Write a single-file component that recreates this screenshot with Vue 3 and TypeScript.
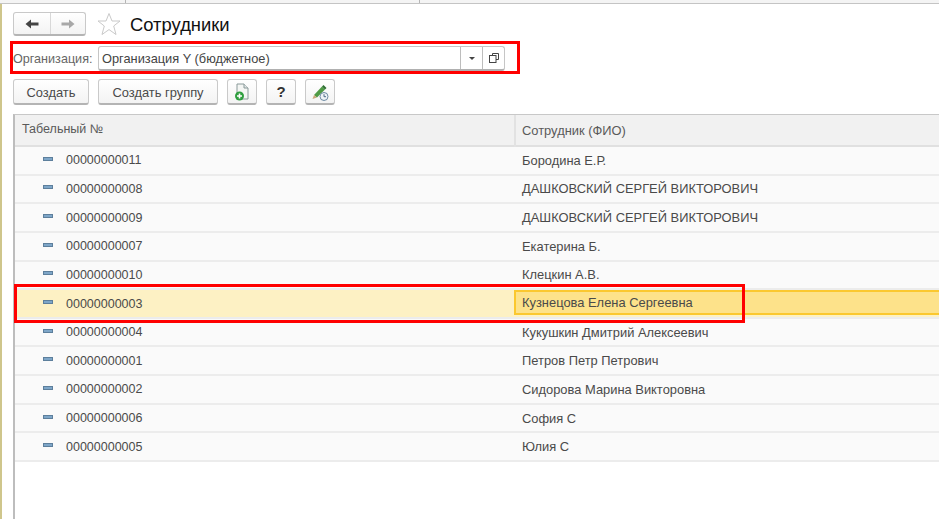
<script setup lang="ts">
interface Row { id: string; name: string; current?: boolean }
const rows: Row[] = [
  { id: '00000000011', name: 'Бородина Е.Р.' },
  { id: '00000000008', name: 'ДАШКОВСКИЙ СЕРГЕЙ ВИКТОРОВИЧ' },
  { id: '00000000009', name: 'ДАШКОВСКИЙ СЕРГЕЙ ВИКТОРОВИЧ' },
  { id: '00000000007', name: 'Екатерина Б.' },
  { id: '00000000010', name: 'Клецкин А.В.' },
  { id: '00000000003', name: 'Кузнецова Елена Сергеевна', current: true },
  { id: '00000000004', name: 'Кукушкин Дмитрий Алексеевич' },
  { id: '00000000001', name: 'Петров Петр Петрович' },
  { id: '00000000002', name: 'Сидорова Марина Викторовна' },
  { id: '00000000006', name: 'София С' },
  { id: '00000000005', name: 'Юлия С' },
]
</script>

<template>
  <div class="page">
    <div class="tabs">
      <div class="tab t1"></div>
      <div class="tab t2"></div>
      <div class="tab t3"></div>
    </div>
    <div class="main">
      <div class="titlebar">
        <div class="navgroup">
          <div class="nav">
            <svg width="16" height="12" viewBox="0 0 16 12"><path d="M1.5 6 7 1.5V4.5H14.5V7.5H7V10.5Z" fill="#444"/></svg>
          </div>
          <div class="nav next">
            <svg width="16" height="12" viewBox="0 0 16 12"><path d="M14.5 6 9 1.5V4.5H1.5V7.5H9V10.5Z" fill="#a8a8a8"/></svg>
          </div>
        </div>
        <svg class="star" width="24" height="24" viewBox="0 0 24 24"><path d="M12 1.5 15 9H23L16.7 14 19 22.5 12 17.6 5 22.5 7.3 14 1 9H9Z" fill="#fff" stroke="#c9c9c9" stroke-width="1"/></svg>
        <h1 class="title">Сотрудники</h1>
      </div>

      <div class="orgrow">
        <span class="orglabel">Организация:</span>
        <div class="field">
          <span class="fieldtext">Организация Y (бюджетное)</span>
          <div class="fbtn"><span class="caret"></span></div>
          <div class="fbtn">
            <svg width="12" height="12" viewBox="0 0 12 12" fill="none" stroke="#444" stroke-width="1"><path d="M4.5 3.5V1.5H10.5V7.5H8"/><rect x="1.5" y="3.5" width="6.5" height="7"/></svg>
          </div>
        </div>
      </div>

      <div class="toolbar">
        <button class="btn b1">Создать</button>
        <button class="btn b2">Создать группу</button>
        <button class="btn icon">
          <svg width="18" height="20" viewBox="0 0 18 20">
            <path d="M4 2H11L15 6V17H4Z" fill="#f4f6f4" stroke="#8a9a9a"/>
            <path d="M11 2V6H15" fill="#dfe6e6" stroke="#8a9a9a"/>
            <circle cx="6.5" cy="14" r="4.5" fill="#2f9e3f"/>
            <path d="M6.5 11.5V16.5M4 14H9" stroke="#fff" stroke-width="1.6"/>
          </svg>
        </button>
        <button class="btn icon q">?</button>
        <button class="btn icon">
          <svg width="20" height="20" viewBox="0 0 20 20">
            <path d="M4 13 12 4.5 15 7.5 7 15.5Z" fill="#4f9a45"/>
            <path d="M12 4.5 13.5 3 16.5 6 15 7.5Z" fill="#2f6f33"/>
            <path d="M4 13 7 15.5 2.5 17Z" fill="#c9a77a"/>
            <circle cx="14" cy="14.5" r="4" fill="#eef3f7" stroke="#6d8aa3"/>
            <path d="M14 12.2V14.7H16" fill="none" stroke="#4d6a85"/>
          </svg>
        </button>
      </div>

      <div class="table">
        <div class="thead">
          <div class="c1 th">Табельный №</div>
          <div class="c2 th">Сотрудник (ФИО)</div>
        </div>
        <div v-for="r in rows" :key="r.id" class="row" :class="{ current: r.current }">
          <div class="c1 td"><span class="dash"></span><span>{{ r.id }}</span></div>
          <div class="c2 td"><span class="cell">{{ r.name }}</span></div>
        </div>
      </div>
    </div>

    <div class="mark m1"></div>
    <div class="mark m2"></div>
  </div>
</template>

<style scoped>
.page {
  position: relative;
  width: 939px;
  height: 519px;
  overflow: hidden;
  background: #fff;
  font-family: "Liberation Sans", Arial, sans-serif;
  color: #4a4a4a;
  display: flex;
  flex-direction: column;
}
.tabs {
  display: flex;
  height: 4px;
  flex: none;
  background: #f4f4f4;
  border-bottom: 1px solid #c4c4c4;
  box-sizing: border-box;
}
.tab { height: 100%; box-sizing: border-box; border-right: 1px solid #b5b5b5; }
.t1 { width: 126px; }
.t2 { width: 294px; }
.t3 { flex: 1; border-right: 0; }
.main {
  flex: 1;
  min-height: 0;
  display: flex;
  flex-direction: column;
  padding-left: 11px;
  border-left: 2px solid #cfc68c;
  box-sizing: border-box;
}
.titlebar {
  display: flex;
  align-items: center;
  height: 24px;
  margin-top: 8px;
  flex: none;
}
.navgroup {
  display: flex;
  width: 73px;
  height: 24px;
  border: 1px solid #c9c9c9;
  border-bottom: 2px solid #b4b4b4;
  border-radius: 3px;
  background: linear-gradient(#fff, #f3f3f3);
  box-sizing: border-box;
}
.nav {
  width: 36px;
  display: flex;
  align-items: center;
  justify-content: center;
}
.next { flex: 1; border-left: 1px solid #d8d8d8; }
.star { margin-left: 11px; flex: none; }
.title {
  margin: 1px 0 0 9px;
  font-size: 18.4px;
  font-weight: 400;
  color: #111;
}
.orgrow {
  display: flex;
  align-items: center;
  height: 25px;
  margin-top: 10px;
  flex: none;
}
.orglabel {
  width: 85px;
  flex: none;
  font-size: 12.6px;
  color: #666;
}
.field {
  display: flex;
  width: 407px;
  height: 25px;
  border: 1px solid #c6c6c6;
  border-bottom: 2px solid #b0b0b0;
  border-radius: 3px;
  box-sizing: border-box;
  align-items: stretch;
}
.fieldtext {
  flex: 1;
  font-size: 12.8px;
  color: #444;
  padding-left: 3px;
  line-height: 23px;
}
.fbtn {
  width: 21px;
  border-left: 1px solid #bdbdbd;
  display: flex;
  align-items: center;
  justify-content: center;
}
.caret {
  width: 0;
  height: 0;
  border-left: 3px solid transparent;
  border-right: 3px solid transparent;
  border-top: 3px solid #444;
}
.toolbar {
  display: flex;
  align-items: center;
  gap: 9px;
  margin-top: 8px;
  height: 26px;
  flex: none;
}
.btn {
  height: 26px;
  border: 1px solid #cacaca;
  border-bottom: 2px solid #b4b4b4;
  border-radius: 3px;
  background: linear-gradient(#fff, #f3f3f3);
  font: 12.9px "Liberation Sans", Arial, sans-serif;
  color: #4a4a4a;
  padding: 1px 0 0;
  box-sizing: border-box;
  display: flex;
  align-items: center;
  justify-content: center;
}
.b1 { width: 76px; }
.b2 { width: 120px; }
.icon { width: 30px; padding-top: 0; }
.q { font-size: 15px; font-weight: 700; color: #333; }
.table {
  flex: 1;
  margin-top: 9px;
  border-left: 2px solid #bdbdbd;
  border-top: 1px solid #c8c8c8;
  background: #fff;
  min-height: 0;
}
.thead {
  display: flex;
  height: 30px;
  background: #f1f1f1;
  border-bottom: 2px solid #e0e0e0;
  box-sizing: content-box;
  font-size: 12.5px;
  color: #5a5a5a;
}
.c1 { width: 499px; flex: none; box-sizing: border-box; }
.c2 { flex: 1; min-width: 0; }
.th {
  display: flex;
  align-items: center;
  padding: 0 0 2px 7px;
  height: 100%;
}
.th.c2 { border-left: 2px solid #e2e2e2; padding-left: 6px; font-size: 12.9px; }
.row {
  display: flex;
  height: 28.65px;
  box-sizing: border-box;
  background: #fafafa;
  border-bottom: 2px solid #ececec;
  font-size: 12.5px;
  color: #4a4a4a;
}
.td { display: flex; align-items: center; height: 100%; }
.c1.td { padding-left: 28px; }
.c2.td { padding-left: 8px; font-size: 12.9px; }
.dash {
  width: 10px;
  height: 4px;
  background: #7ea6c8;
  border: 1px solid #5d7f9c;
  box-sizing: border-box;
  margin-right: 13px;
  margin-top: -3px;
  flex: none;
}
.row.current { background: #fdf1c4; }
.row.current .c2 {
  background: #fde28a;
  border: 2px solid #fbc82f;
  border-right: 0;
  box-sizing: border-box;
  padding-left: 6px;
  height: 25px;
}
.mark {
  position: absolute;
  border: 3px solid #f00;
  box-sizing: border-box;
  pointer-events: none;
}
.m1 { left: 10px; top: 41px; width: 510px; height: 33px; }
.m2 { left: 14px; top: 284px; width: 731px; height: 39px; }
</style>
